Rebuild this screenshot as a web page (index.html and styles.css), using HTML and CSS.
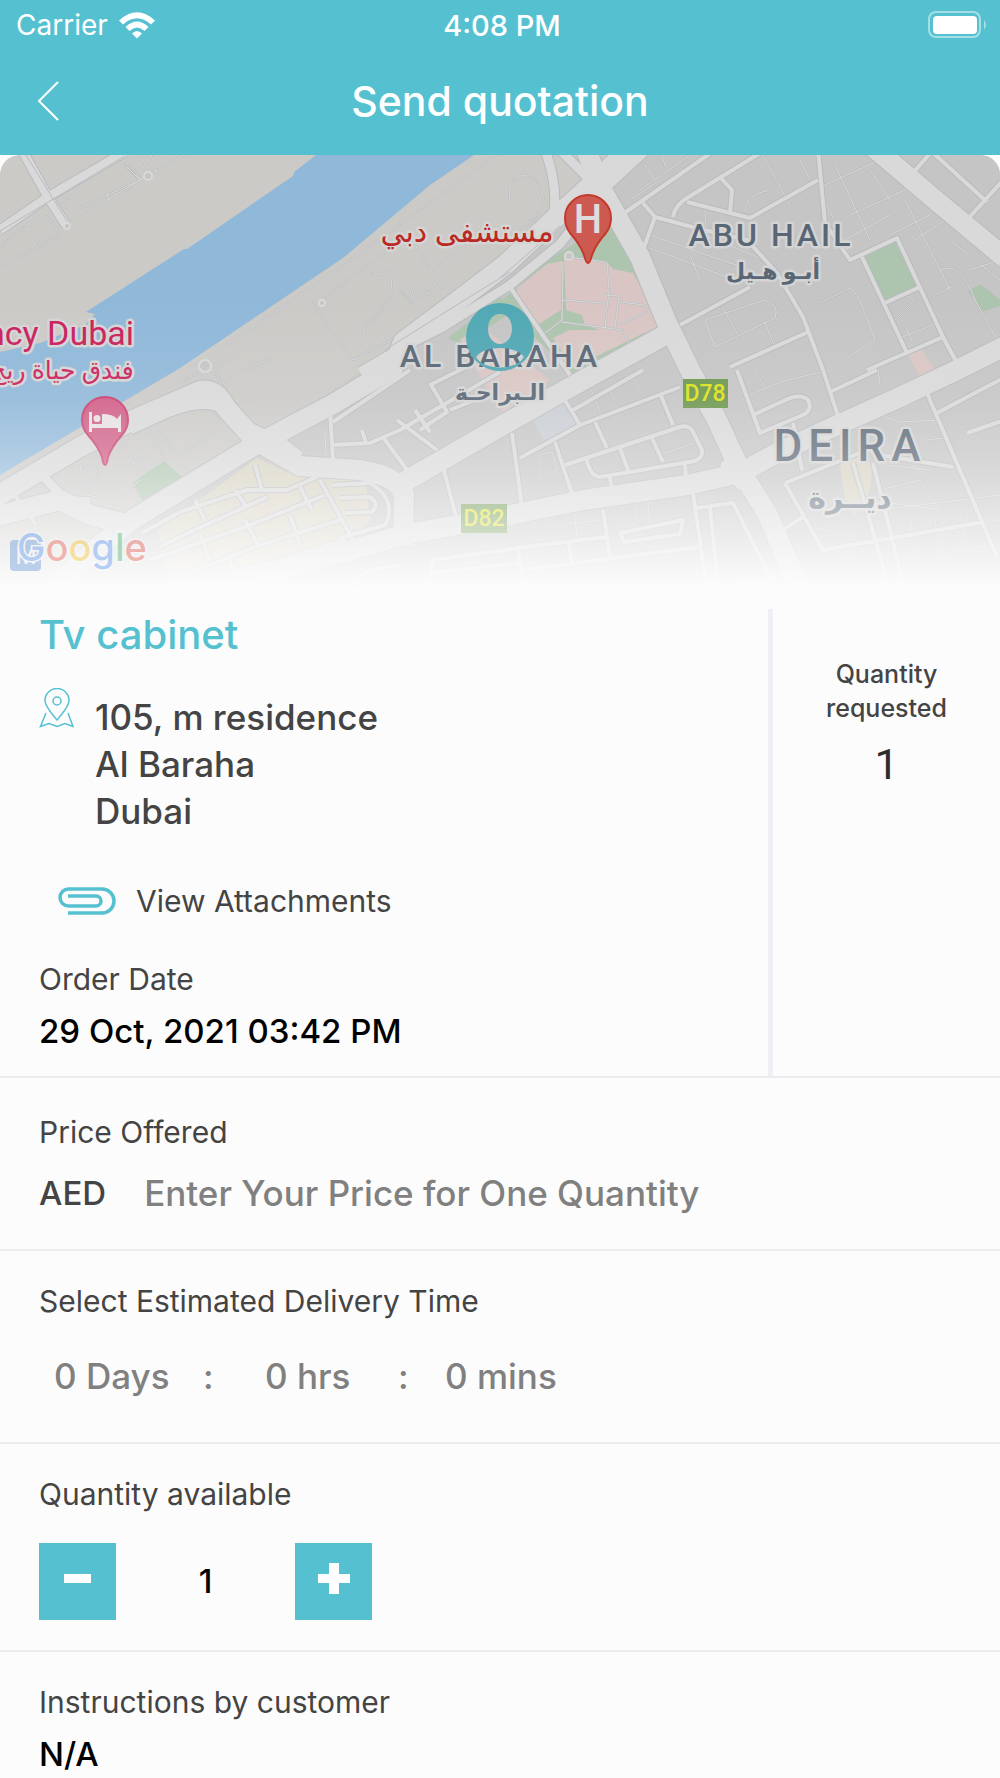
FILE: index.html
```
<!DOCTYPE html>
<html lang="en">
<head>
    <meta charset="UTF-8">
    <meta name="viewport" content="width=device-width, initial-scale=1.0">
    <title>Send quotation</title>
    <link rel="stylesheet" href="styles.css">
</head>
<body>
    <header class="header">
        <div class="status">
            <div class="carrier">
                <span>Carrier</span>
                <svg class="wifi" width="38" height="28" viewBox="0 0 38 28">
                    <path d="M1 9.500Q19-7 37 9.500L33 13.500Q19 1 5 13.500Z"/>
                    <path d="M7.500 16Q19 5 30.500 16L26.500 20Q19 13 11.500 20Z"/>
                    <path d="M14 22.500Q19 17.500 24 22.500L19 27.500Z"/>
                </svg>
            </div>
            <span class="time">4:08 PM</span>
            <svg class="battery" width="60" height="28" viewBox="0 0 60 28">
                <rect x="1" y="1" width="51" height="25" rx="7"/>
                <rect class="level" x="5" y="5" width="44" height="18" rx="4"/>
                <path class="cap" d="M56 9Q60 13.500 56 19Z"/>
            </svg>
        </div>
        <div class="nav">
            <button class="back" type="button" aria-label="Back">
                <svg width="24" height="42" viewBox="0 0 24 42"><path d="M21 2L2 21L21 40"/></svg>
            </button>
            <h1>Send quotation</h1>
        </div>
    </header>

    <div class="map">
        <svg viewBox="0 155 1000 433">
            <defs>
                <linearGradient id="fade" x1="0" y1="0" x2="0" y2="1">
                    <stop offset="0.350" stop-color="#fcfcfc" stop-opacity="0"/>
                    <stop offset="0.560" stop-color="#fcfcfc" stop-opacity="0.100"/>
                    <stop offset="0.680" stop-color="#fcfcfc" stop-opacity="0.270"/>
                    <stop offset="0.750" stop-color="#fcfcfc" stop-opacity="0.400"/>
                    <stop offset="0.870" stop-color="#fcfcfc" stop-opacity="0.680"/>
                    <stop offset="1" stop-color="#fcfcfc"/>
                </linearGradient>
                <g id="major">
                    <path d="M-10 500L80 447L133 420L200 391Q216 388 226 408L255 440"/>
                    <path d="M40 600L100 545L135 518L250 448L333 404L393 368L403 342L455 303L505 265L567 207L640 140"/>
                    <path d="M255 440L300 466L360 470Q398 476 404 494L403 545"/>
                    <path d="M390 490L503 425L567 389L667 334"/>
                    <path d="M-10 518L60 500L90 515L130 525"/>
                    <path d="M582 140L603 192L640 257L667 323L690 370L717 420L740 470L767 513L800 590"/>
                    <path d="M170 592L300 565L403 535L500 517L583 500L687 485L740 473L777 453L833 427L900 397L957 370L1005 346"/>
                    <path d="M865 140L933 198L1005 258"/>
                </g>
                <g id="middle">
                    <path d="M0 230L48 197L125 152M22 150L48 197L66 225"/>
                    <path d="M360 372L403 347L443 327L510 285L560 244L600 193L655 142"/>
                    <path d="M130 430L170 412Q205 398 225 410L240 430"/>
                    <path d="M545 150Q560 190 552 225M560 150L590 180M45 478L65 500L90 502"/>
                    <path d="M236 420L252 428L282 442L300 456M236 462L250 440M725 465L740 485L755 465Z"/>
                </g>
                <g id="minor">
                    <path d="M623 214L715 150M673 217Q675 205 687 198L765 150M643 203L655 217L700 229L747 240L777 273L803 317L823 370L840 422M687 202L750 218L818 180M818 150L825 223L850 260L897 238L943 337L957 363M862 257L907 353M885 303L920 287M720 177L732 190L730 213M655 217L643 250M680 325L750 287M730 367L808 332M867 370L943 337M913 173L933 150M930 150L987 202M967 220L1005 178"/>
                    <path d="M520 458L580 425L680 387M563 397L580 425M573 410L643 370M555 442L573 497M595 422L607 448M660 393L673 425M565 465L680 427Q690 424 694 434L702 450Q703 458 695 461L600 477Q590 476 587 460M620 448L628 470M652 438L663 462M610 477L612 492M685 463L686 480M737 370L760 433L803 415Q813 410 808 400Q802 394 790 398L753 415M830 392L877 370M793 423L802 470M785 483L867 450M927 393L997 557M937 413L1005 377M967 433L1005 420M785 483L823 550L983 522M853 463L890 590M873 463L905 590M783 530L803 517M880 455L953 467"/>
                    <path d="M500 550L607 537M603 510L610 557M523 570L698 547M693 493L707 590M697 508L733 503L770 577M710 508L718 585L775 578M512 433L522 507M620 533L683 520L680 534L624 542ZM568 540L572 562M518 548L524 590"/>
                    <path d="M142 533L180 512L247 490L287 490L317 477M160 547L190 532L267 497M320 480L353 540M333 485L370 483Q398 500 385 525L340 538M340 498L370 497Q380 504 372 512L345 513M150 560L250 525L325 495M170 580L260 545L340 520M235 490L245 505M195 500L205 520M255 465L262 490M300 487L312 510M228 555L240 590M245 520L258 545M290 515L300 545M200 535L210 560M280 560L345 540"/>
                    <path d="M330 410L333 460M333 445L370 443L400 430L500 372M333 422L410 370M383 437L407 470M430 383L447 412L420 430M397 420L437 450M362 430L366 443M443 467L457 520M430 385L470 365M415 410L430 432M450 410L475 400M510 287L570 375"/>
                    <path d="M430 590L433 560L520 548M430 573L520 563M15 495L36 525M340 590L370 570L400 565"/>
                </g>
                <g id="thin">
                    <path d="M563 262L562 320L540 337M607 262L609 290L605 328M603 295L619 296L615 328M562 300L603 303M562 322L622 330L630 345M619 302L645 305L647 312L622 324M570 257L605 262"/>
                    <path d="M0 250Q5 238 40 216Q48 212 60 235Q50 240 0 268M28 224L40 245M58 205L66 223M63 205Q66 196 74 197L80 208L140 180L125 165Q128 158 140 180L148 175L185 155M140 150L147 172M150 150L156 172M107 193L110 203M75 220L148 175"/>
                    <path d="M500 152L330 275L215 353L190 368M308 298L353 360L395 338M320 303L350 278L400 242M370 270Q376 282 398 265M390 275Q398 295 370 322Q360 328 364 338M400 290L412 303L440 285M410 285L415 300M418 280L430 297M415 245L443 290M430 270L475 240L480 225M200 378L235 355M180 382L210 368L225 385M235 375L270 358M235 405L258 397"/>
                    <path d="M510 200Q505 175 530 175Q550 190 540 212Q525 230 500 240M630 200L660 180M640 190L690 155M655 215L765 260M650 235L750 270M650 248L740 282M690 255L700 280M645 165L655 180M660 150L665 165M760 150L790 205M800 160L810 180M705 210L706 225M745 212Q745 195 770 190M825 185L880 160L915 200M835 165L870 240M818 185L850 255M850 215L905 190M870 170L890 200M845 240L890 215M905 200L950 290M915 240L960 210M890 235L930 215M940 270Q960 260 975 300L1000 345M935 295L955 285M950 240L1000 280M970 270L1000 260M975 350Q985 340 990 355M820 303L850 288Q857 288 875 340L847 358M705 320L765 300Q780 305 775 318L715 347ZM720 303L738 335M765 322L773 343M895 320L915 300L905 295M895 340L940 322M905 325L912 340"/>
                    <path d="M745 397L780 382L830 370M755 370L765 387M540 455L552 452L557 470L540 480ZM588 383L600 410M605 385L615 400M630 375L640 390M625 410L635 420M665 453L695 443M880 385L878 370M880 415L900 422L940 420M925 440L945 438M885 465L930 470L965 498M880 490L920 480L940 510M905 460L925 475M870 500L940 510M810 527L850 535M820 560L870 550M880 510L1000 495M880 540L1000 520M845 570L990 545M935 520L945 590M960 515L975 590M910 515L920 590M560 525L600 520M575 515L577 540M635 503L637 530M648 500L650 525M530 510L555 525M590 565L595 590M620 560L625 590M640 557L645 590M660 555L665 590M740 560L755 555"/>
                    <path d="M120 435L140 475L165 460L145 425M130 465L150 455M157 425L178 458L215 430Q222 420 210 410M80 465L85 495L120 500L140 480M80 470Q95 460 98 475Q92 485 82 480M325 432L326 455M460 460L490 440M457 440L470 430M20 560L60 540M60 570L100 560L130 590M90 560L110 545"/>
                </g>
            </defs>
            <rect class="land" y="150" width="1000" height="440"/>
            <path class="urban" d="M655 150L500 267L360 372L250 450L100 545L40 590H1000V150Z"/>
            <path class="water" d="M316 155L294 172L293 176L187 249L184 249L86 312L95 314L85 325L40 343L0 352V475L180 368L343 258L430 185L474 155Z"/>
            <path class="green" d="M500 302L520 285L550 258L613 222L655 312L640 340L575 378Z"/>
            <path class="green" d="M863 257L897 241L918 285L886 302ZM968 291L981 284L1000 300V306L981 312ZM133 483L163 460L183 478L143 503Z"/>
            <path class="green" d="M448 338L500 297L512 312L462 345Z"/>
            <path class="pink" d="M517 288L547 264L562 261L561 310L545 320L538 325L517 295ZM564 258L607 262L613 269L633 273L650 303L658 326L573 368L553 338L570 330L600 330L585 325L582 315L566 310Z"/>
            <path class="pink" d="M460 340L480 325L550 380L503 412L485 385ZM908 354L922 350L935 370L920 378Z"/>
            <path class="lot" d="M530 417L563 399L579 424L545 441Z"/>
            <path class="sand" d="M157 530L213 490L257 458L287 472L348 477L366 485L370 520L345 545L225 583H170Z"/>
            <path class="sand" d="M840 463L853 452L872 465L870 490L855 515L845 500Z"/>

            <use href="#thin" class="thin-edge"/>
            <use href="#thin" class="thin"/>
            <use href="#minor" class="minor-edge"/>
            <use href="#middle" class="middle-edge"/>
            <use href="#major" class="major-edge"/>
            <use href="#minor" class="minor"/>
            <use href="#middle" class="middle"/>
            <use href="#major" class="major"/>
            <path class="median" d="M0 231L125 156M24 152L70 226M385 350L455 306L510 272M500 278L560 226"/>
            <circle class="ring" cx="148" cy="176" r="4"/>
            <circle class="ring" cx="67" cy="226" r="3"/>
            <circle class="ring" cx="569" cy="256" r="4"/>
            <circle class="ring" cx="322" cy="303" r="3"/>
            <circle class="ring" cx="205" cy="366" r="6"/>

            <!-- hospital pin -->
            <path class="pin-red" d="M588 263Q586 263 584 255Q580 244 570 233Q565 226 565 218A23 23 0 0 1 611 218Q611 226 606 233Q596 244 592 255Q590 263 588 263Z"/>
            <text class="pin-letter" x="588" y="233">H</text>
            <text class="place red" x="467" y="242">مستشفى دبي</text>

            <!-- hotel pin -->
            <path class="pin-pink" d="M105 465Q103 465 102 457Q98 446 88 435Q82 428 82 420A23 23 0 0 1 128 420Q128 428 122 435Q112 446 108 457Q107 465 105 465Z"/>
            <path class="bed" d="M89 412H92V424H102V414Q113 414 117 419L121 414V432H118V428H92V432H89ZM97 415A3.500 3.500 0 1 1 97 422A3.500 3.500 0 1 1 97 415Z"/>
            <text class="hotel" x="134" y="345">ncy Dubai</text>
            <text class="hotel-ar" x="62" y="379">فندق حياة ريج</text>

            <text class="area" x="771" y="246">ABU HAIL</text>
            <text class="area-ar" x="773" y="279">أبـو هـيل</text>
            <text class="area" x="500" y="367">AL BARAHA</text>
            <text class="area-ar" x="500" y="400">الـبراحـة</text>
            <text class="area big" x="850" y="461">DEIRA</text>
            <text class="area-ar big" x="850" y="508">ديــرة</text>

            <!-- delivery spot -->
            <path class="spot" fill-rule="evenodd" d="M500 303A34 34 0 1 1 500 371A34 34 0 1 1 500 303ZM500 314C492 314 488 321 488 329C488 337 493 344 500 344C507 344 512 337 512 329C512 321 508 314 500 314ZM476 357C484 345 516 345 524 357C516 371 484 371 476 357Z"/>

            <rect class="route" x="683" y="379" width="45" height="29"/>
            <text class="route-no" x="705" y="401">D78</text>
            <rect class="route" x="461" y="504" width="46" height="29"/>
            <text class="route-no" x="484" y="526">D82</text>

            <rect y="150" width="1000" height="438" fill="url(#fade)"/>

            <g class="credit">
                <rect x="10" y="540" width="31" height="31" rx="4"/>
                <text class="metro" x="26" y="564">M</text>
                <text class="google" x="17" y="561"><tspan class="g-blue">G</tspan><tspan class="g-red">o</tspan><tspan class="g-yellow">o</tspan><tspan class="g-blue">g</tspan><tspan class="g-green">l</tspan><tspan class="g-red">e</tspan></text>
            </g>
        </svg>
    </div>

    <main>
        <section class="order">
            <div class="info">
                <h2>Tv cabinet</h2>
                <div class="address">
                    <svg width="36" height="40" viewBox="0 0 36 40">
                        <path d="M18 32Q6 18 6 12.500A12 12 0 0 1 30 12.500Q30 18 18 32Z"/>
                        <circle cx="18" cy="13" r="4"/>
                        <path d="M7 25L1.500 38.500L10 35.500L18 38.500L26 35.500L34 38.500L29 25"/>
                    </svg>
                    <p class="value">105, m residence<br>Al Baraha<br>Dubai</p>
                </div>
                <a class="attach" href="#attachments">
                    <svg width="58" height="28" viewBox="0 0 58 28">
                        <path d="M10 26H44A12 12 0 0 0 44 2H10.500A8.500 8.500 0 0 0 10.500 19H38A4.500 4.500 0 0 0 38 9H10"/>
                    </svg>
                    <span>View Attachments</span>
                </a>
                <p class="label">Order Date</p>
                <p class="value dark">29 Oct, 2021 03:42 PM</p>
            </div>
            <div class="requested">
                <p>Quantity<br>requested</p>
                <strong>1</strong>
            </div>
        </section>

        <section class="price">
            <label class="label" for="price">Price Offered</label>
            <div class="price-row">
                <span class="value currency">AED</span>
                <input class="value" id="price" type="text" inputmode="decimal" placeholder="Enter Your Price for One Quantity">
            </div>
        </section>

        <section class="delivery">
            <p class="label" id="delivery">Select Estimated Delivery Time</p>
            <div class="time-row" role="group" aria-labelledby="delivery">
                <select class="value" aria-label="Days"><option>0 Days</option><option>1 Days</option><option>2 Days</option></select>
                <span class="value">:</span>
                <select class="value" aria-label="Hours"><option>0 hrs</option><option>1 hrs</option><option>2 hrs</option></select>
                <span class="value">:</span>
                <select class="value" aria-label="Minutes"><option>0 mins</option><option>15 mins</option><option>30 mins</option></select>
            </div>
        </section>

        <section class="available">
            <label class="label" for="qty">Quantity available</label>
            <div class="stepper">
                <button type="button" id="minus" aria-label="Less">
                    <svg width="32" height="38" viewBox="0 0 32 38"><path d="M2 11H29V20H2Z"/></svg>
                </button>
                <input class="value dark" id="qty" type="text" inputmode="numeric" value="1">
                <button type="button" id="plus" aria-label="More">
                    <svg width="32" height="38" viewBox="0 0 32 38"><path d="M11 0H21V11H32V20H21V31H11V20H0V11H11Z"/></svg>
                </button>
            </div>
        </section>

        <section class="notes">
            <p class="label">Instructions by customer</p>
            <p class="value dark">N/A</p>
        </section>
    </main>

    <script>
        const qty=document.getElementById('qty');
        document.getElementById('minus').onclick=function(){
            qty.value=Math.max(1,Number(qty.value)-1);
        }
        document.getElementById('plus').onclick=function(){
            qty.value=Number(qty.value)+1;
        }
    </script>
</body>
</html>
```
FILE: styles.css
```
*{
    box-sizing: border-box;
}
body{
    margin: 0;
    background: #fcfcfc;
    color: #444444;
    font-family: Inter, "Noto Sans", sans-serif;
}
h1,h2,p{
    margin: 0;
    font-weight: 500;
}
button,input,select{
    margin: 0;
    padding: 0;
    border: 0;
    border-radius: 0;
    background: none;
    font-family: inherit;
    color: inherit;
}
svg{
    display: block;
}

/* header */
.header{
    background: #55c1d0;
    color: #ffffff;
}
.status{
    display: grid;
    grid-template-columns: 1fr auto 1fr;
    align-items: center;
    height: 50px;
    padding: 0 12px 0 16px;
    font-size: 28px;
}
.carrier{
    display: flex;
    align-items: center;
    gap: 10px;
}
.wifi{
    fill: #ffffff;
}
.time{
    font-size: 29px;
    font-weight: 500;
}
.battery{
    justify-self: end;
    fill: none;
    stroke: #a4dfe7;
    stroke-width: 2;
}
.battery .level{
    fill: #ffffff;
    stroke: none;
}
.battery .cap{
    fill: #a4dfe7;
    stroke: none;
}
.nav{
    display: grid;
    grid-template-columns: 100px 1fr 100px;
    align-items: center;
    height: 105px;
    padding-bottom: 4px;
}
.back{
    padding-left: 37px;
    cursor: pointer;
}
.back svg{
    fill: none;
    stroke: #ffffff;
    stroke-width: 2;
}
.nav h1{
    text-align: center;
    font-size: 41px;
}

/* map */
.map{
    overflow: hidden;
    border-radius: 20px 20px 0 0;
}
.map svg{
    width: 100%;
    height: auto;
}
.land{ fill: #cbcac7; }
.urban{ fill: #c5c5c5; }
.water{ fill: #90b8d9; }
.green{ fill: #adc4ae; }
.pink{ fill: #d9c6c4; }
.lot{ fill: #c8ccd2; }
.sand{ fill: #d6d1c0; }
.major,.middle,.minor,.thin,
.major-edge,.middle-edge,.minor-edge,.thin-edge,.median,.ring{
    fill: none;
    stroke: #d9d9d9;
    stroke-linejoin: round;
}
.major-edge,.middle-edge,.minor-edge,.thin-edge,.median{
    stroke: #b9babf;
}
.major{ stroke-width: 20; }
.major-edge{ stroke-width: 22; }
.middle{ stroke-width: 9; }
.middle-edge{ stroke-width: 11; }
.minor{ stroke-width: 4; }
.minor-edge{ stroke-width: 6; }
.thin{ stroke-width: 1; }
.thin-edge{ stroke-width: 2; }
.ring{ stroke-width: 2; fill: #c5c5c5; }
.pin-red{
    fill: #cc5a50;
    stroke: #c4392c;
    stroke-width: 2;
}
.pin-pink{
    fill: #cf5c85;
    stroke: #c93c6e;
    stroke-width: 2;
}
.bed{ fill: #e8e0e2; }
.map text{
    text-anchor: middle;
    font-family: Roboto, "DejaVu Sans", sans-serif;
    paint-order: stroke;
}
.map .pin-letter{
    fill: #dddddd;
    font-size: 40px;
    font-weight: 500;
}
.place,.hotel,.hotel-ar,.area,.area-ar{
    stroke: #d4d4d4;
    stroke-width: 5;
    stroke-linejoin: round;
}
.red{
    fill: #bb2a22;
    font-size: 30px;
}
.map .hotel{
    fill: #c9205c;
    font-size: 34px;
    text-anchor: end;
}
.hotel-ar{
    fill: #c9205c;
    font-size: 25px;
}
.area{
    fill: #596675;
    font-size: 32px;
    font-weight: 500;
    letter-spacing: 3px;
}
.area.big{
    font-size: 44px;
    letter-spacing: 6px;
}
.area-ar{
    fill: #596675;
    font-size: 22px;
    font-weight: 700;
}
.area-ar.big{
    font-size: 30px;
}
.spot{ fill: #51a8b4; }
.route{ fill: #6c964d; }
.route-no{
    fill: #dde01c;
    font-size: 23px;
    font-weight: 500;
}
.credit{ opacity: 0.35; }
.credit rect{ fill: #4f86d6; }
.map .metro{
    fill: #ffffff;
    font-size: 24px;
}
.map .google{
    text-anchor: start;
    font-family: Inter, sans-serif;
    font-size: 38px;
    font-weight: 500;
    stroke: #ffffff;
    stroke-width: 3;
}
.g-blue{ fill: #4285f4; }
.g-red{ fill: #ea4335; }
.g-yellow{ fill: #fbbc05; }
.g-green{ fill: #34a853; }

/* text */
.label{
    display: block;
    font-size: 30px;
    font-weight: 400;
    line-height: 40px;
}
.value{
    font-size: 35px;
    font-weight: 500;
    line-height: 47px;
}
.dark,.currency{
    font-size: 33px;
}
.dark{
    color: #000000;
}
section{
    padding: 30px 39px;
    border-bottom: 2px solid #ebebf0;
}

/* order */
.order{
    display: grid;
    grid-template-columns: 1fr 232px;
    padding: 0;
}
.info{
    padding: 21px 39px;
}
.info h2{
    color: #55c1d0;
    font-size: 40px;
    line-height: 52px;
}
.address{
    display: flex;
    gap: 20px;
    margin-top: 33px;
}
.address svg{
    margin-top: -6px;
    fill: none;
    stroke: #55c1d0;
    stroke-width: 1.500;
}
.attach{
    display: flex;
    align-items: center;
    gap: 20px;
    margin: 46px 0 38px 19px;
    color: inherit;
    font-size: 30px;
    line-height: 40px;
    text-decoration: none;
}
.attach svg{
    fill: none;
    stroke: #55c1d0;
    stroke-width: 3.500;
}
.info .dark{
    margin-top: 9px;
}
.requested{
    margin-top: 21px;
    padding-top: 48px;
    border-left: 5px solid #f0f0f4;
    text-align: center;
    font-size: 25px;
    line-height: 34px;
}
.requested strong{
    display: block;
    margin-top: 11px;
    color: #2d2d2d;
    font-family: Roboto, sans-serif;
    font-size: 43px;
    font-weight: 400;
    line-height: 56px;
}

/* price */
.price{
    padding-top: 34px;
    padding-bottom: 32px;
}
.price-row{
    display: flex;
    gap: 38px;
    margin-top: 18px;
}
.price-row input{
    flex: 1;
    min-width: 0;
    height: 47px;
}
.price-row input::placeholder{
    color: #808080;
    opacity: 1;
}

/* delivery time */
.delivery{
    padding-bottom: 42px;
}
.time-row{
    display: grid;
    grid-template-columns: 149px 62px 133px 47px 1fr;
    margin-top: 32px;
    padding-left: 15px;
    color: #808080;
}
.time-row select{
    height: 47px;
    appearance: none;
    cursor: pointer;
}

/* quantity */
.stepper{
    display: flex;
    margin-top: 29px;
}
.stepper button{
    display: flex;
    justify-content: center;
    align-items: center;
    width: 77px;
    height: 77px;
    background: #55c1d0;
    cursor: pointer;
}
.stepper svg{
    fill: #ffffff;
}
.stepper input{
    width: 179px;
    text-align: center;
}

.notes{
    padding-bottom: 0;
    border-bottom: 0;
}
.notes .dark{
    margin-top: 9px;
}
```
